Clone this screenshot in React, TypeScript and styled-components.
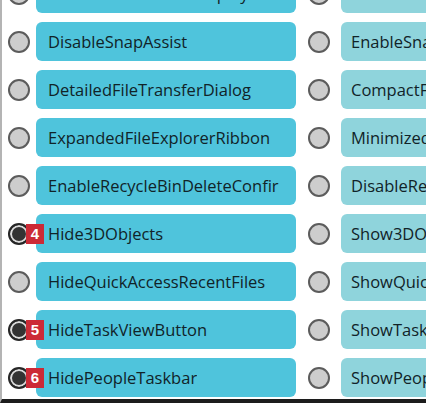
import React from 'react';
import styled, { createGlobalStyle } from 'styled-components';

const GlobalStyle = createGlobalStyle`
  html, body {
    margin: 0;
    padding: 0;
    background: #ffffff;
    overflow: hidden;
  }
`;

type Option = {
  left: string;
  right: string;
  badge?: number;
};

const options: Option[] = [
  { left: 'HideFileExtensionsDisplay', right: 'ShowFileExtensions' },
  { left: 'DisableSnapAssist', right: 'EnableSnapAssist' },
  { left: 'DetailedFileTransferDialog', right: 'CompactFileTransferDialog' },
  { left: 'ExpandedFileExplorerRibbon', right: 'MinimizedFileExplorerRibbon' },
  { left: 'EnableRecycleBinDeleteConfir', right: 'DisableRecycleBinDeleteConfirmation' },
  { left: 'Hide3DObjects', right: 'Show3DObjects', badge: 4 },
  { left: 'HideQuickAccessRecentFiles', right: 'ShowQuickAccessRecentFiles' },
  { left: 'HideTaskViewButton', right: 'ShowTaskViewButton', badge: 5 },
  { left: 'HidePeopleTaskbar', right: 'ShowPeopleTaskbar', badge: 6 },
];

const Window = styled.div`
  height: 399px;
  overflow: hidden;
  border-left: 2px solid #b4b4b4;
  border-bottom: 4px solid #1c1c1c;
  font-family: 'Open Sans', 'Noto Sans', sans-serif;
`;

const Grid = styled.div`
  display: grid;
  grid-template-columns: 34px 260px 45px 120px;
  grid-auto-rows: 39px;
  row-gap: 9px;
  margin-top: -26px;
  width: 459px;
`;

const RadioCell = styled.div`
  display: flex;
  align-items: center;
  justify-content: center;
  position: relative;
`;

const Radio = styled.span<{ $checked?: boolean }>`
  box-sizing: border-box;
  width: 22px;
  height: 22px;
  border-radius: 50%;
  border: 2px solid ${p => (p.$checked ? '#262626' : '#5c5c5c')};
  background: ${p => (p.$checked ? '#333333' : '#cdcdcd')};
  box-shadow: ${p => (p.$checked ? 'inset 0 0 0 2px #dcdcdc' : 'none')};
`;

const Choice = styled.div<{ $tone: 'primary' | 'secondary' }>`
  position: relative;
  display: flex;
  align-items: center;
  padding-left: ${p => (p.$tone === 'primary' ? '12px' : '10px')};
  border-radius: 6px;
  background: ${p => (p.$tone === 'primary' ? '#4fc4dc' : '#8fd4dc')};
  color: #112328;
  font-size: 16.5px;
  white-space: nowrap;
`;

const Label = styled.span`
  overflow: hidden;
  display: block;
  max-width: 100%;
`;

const Badge = styled.span`
  position: absolute;
  left: -10px;
  top: 50%;
  transform: translateY(-50%);
  width: 18px;
  height: 20px;
  display: flex;
  align-items: center;
  justify-content: center;
  background: #cc2a36;
  color: #ffffff;
  font-family: 'Liberation Sans', Arial, sans-serif;
  font-weight: 700;
  font-size: 15px;
  z-index: 1;
`;

export default function App() {
  return (
    <>
      <GlobalStyle />
      <Window>
        <Grid>
          {options.map(o => (
            <React.Fragment key={o.left}>
              <RadioCell>
                <Radio $checked={!!o.badge} />
              </RadioCell>
              <Choice $tone="primary">
                {o.badge && <Badge>{o.badge}</Badge>}
                <Label>{o.left}</Label>
              </Choice>
              <RadioCell>
                <Radio />
              </RadioCell>
              <Choice $tone="secondary">
                <Label>{o.right}</Label>
              </Choice>
            </React.Fragment>
          ))}
        </Grid>
      </Window>
    </>
  );
}
